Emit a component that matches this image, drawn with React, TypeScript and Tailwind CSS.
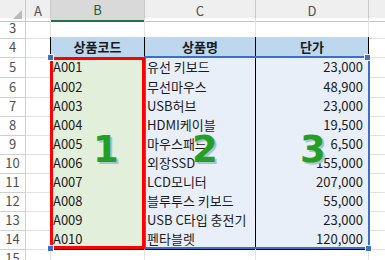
import React from "react";

type Row = { n: number; code?: string; name?: string; price?: string; head?: boolean };

const rows: Row[] = [
  { n: 3 },
  { n: 4, code: "상품코드", name: "상품명", price: "단가", head: true },
  { n: 5, code: "A001", name: "유선 키보드", price: "23,000" },
  { n: 6, code: "A002", name: "무선마우스", price: "48,900" },
  { n: 7, code: "A003", name: "USB허브", price: "23,000" },
  { n: 8, code: "A004", name: "HDMI케이블", price: "19,500" },
  { n: 9, code: "A005", name: "마우스패드", price: "6,500" },
  { n: 10, code: "A006", name: "외장SSD", price: "155,000" },
  { n: 11, code: "A007", name: "LCD모니터", price: "207,000" },
  { n: 12, code: "A008", name: "블루투스 키보드", price: "55,000" },
  { n: 13, code: "A009", name: "USB C타입 충전기", price: "23,000" },
  { n: 14, code: "A010", name: "펜타블렛", price: "120,000" },
  { n: 15 },
];

const heights: Record<number, string> = { 4: "h-[20px]", 5: "h-[20px]" };

function Handle({ className }: { className: string }) {
  return <div className={`absolute h-[7px] w-[7px] border border-white bg-[#3a70c6] ${className}`} />;
}

export default function App() {
  return (
    <div className="relative h-[260px] w-[385px] overflow-hidden bg-white font-['Noto_Sans_CJK_KR','Noto_Sans',sans-serif] text-[13px] text-[#1b1b1b]">
      {/* column headers */}
      <div className="grid h-[18px] grid-cols-[26px_25px_94px_111px_113px_1fr] bg-[#efefef] text-[13px] text-[#505050]">
        <div className="relative border-r border-b border-[#c8c8c8]">
          <svg className="absolute right-[3px] bottom-[2px]" width="9" height="9" viewBox="0 0 9 9">
            <polygon points="9,0 9,9 0,9" fill="#b9b9b9" />
          </svg>
        </div>
        <div className="flex items-center justify-center border-r border-b border-[#c8c8c8]">A</div>
        <div className="flex items-center justify-center border-r border-b-2 border-r-[#c8c8c8] border-b-[#217346] bg-[#d9d9d9] text-[#1f5e3a]">B</div>
        <div className="flex items-center justify-center border-r border-b border-[#c8c8c8]">C</div>
        <div className="flex items-center justify-center border-r border-b border-[#c8c8c8]">D</div>
        <div className="border-b border-[#c8c8c8]" />
      </div>

      {rows.map((r) => {
        const inTable = r.n >= 4 && r.n <= 14;
        const bottomBlack = r.n >= 3 && r.n <= 14;
        const bB = bottomBlack ? "border-b-black" : "border-b-[#e1e1e1]";
        const bR = inTable ? "border-r-black" : "border-r-[#e1e1e1]";
        const head = "bg-[#bdd7ee] font-bold justify-center";
        return (
          <div key={r.n} className={`grid grid-cols-[26px_25px_94px_111px_113px_1fr] ${heights[r.n] ?? "h-[19px]"}`}>
            <div className="flex items-center justify-center border-r border-b border-[#d0d0d0] text-[13px] text-[#505050]">
              {r.n}
            </div>
            <div className={`border-r border-b border-b-[#e1e1e1] ${bR}`} />
            <div className={`flex items-center border-r border-b px-[2px] ${bB} ${bR} ${r.head ? head : inTable ? "bg-[#e2efda]" : ""}`}>
              {r.code}
            </div>
            <div
              className={`flex items-center overflow-hidden whitespace-nowrap border-r border-b px-[2px] ${bB} ${bR} ${
                r.head ? head : inTable ? "bg-[#e8eff9]" : ""
              }`}
            >
              {r.name}
            </div>
            <div
              className={`flex items-center border-r border-b px-[5px] ${bB} ${bR} ${
                r.head ? head : inTable ? "justify-end bg-[#e8eff9]" : ""
              }`}
            >
              {r.price}
            </div>
            <div className="border-b border-[#e1e1e1]" />
          </div>
        );
      })}

      {/* referenced range C5:D14 */}
      <div className="absolute top-[56px] left-[144px] h-[193px] w-[226px] border-2 border-[#3a70c6]" />
      <Handle className="top-[54px] left-[364px]" />
      <Handle className="top-[245px] left-[365px]" />

      {/* red box B5:B14 */}
      <div className="absolute top-[57px] left-[50px] h-[192px] w-[95px] border-[3px] border-[#ff0000]" />
      <Handle className="top-[54px] left-[47px]" />
      <Handle className="top-[245px] left-[47px]" />

      {/* big labels */}
      {[
        { t: "1", x: "left-[93px]" },
        { t: "2", x: "left-[192px]" },
        { t: "3", x: "left-[300px]" },
      ].map((l) => (
        <span
          key={l.t}
          className={`absolute top-[131px] ${l.x} font-['DejaVu_Sans',sans-serif] text-[37px] leading-none font-bold text-[#22a024] [text-shadow:2px_2px_0_#aebfd6]`}
        >
          {l.t}
        </span>
      ))}
    </div>
  );
}
